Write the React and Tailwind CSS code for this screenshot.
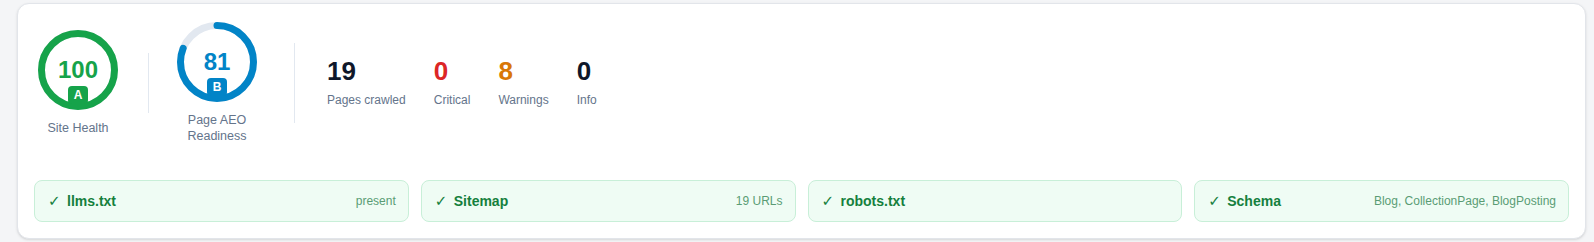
import React from 'react';

const checks = [
  { name: 'llms.txt', detail: 'present' },
  { name: 'Sitemap', detail: '19 URLs' },
  { name: 'robots.txt', detail: '' },
  { name: 'Schema', detail: 'Blog, CollectionPage, BlogPosting' },
];

const stats = [
  { value: '19', label: 'Pages crawled', color: 'text-[#0f172a]' },
  { value: '0', label: 'Critical', color: 'text-[#dc2626]' },
  { value: '8', label: 'Warnings', color: 'text-[#d97706]' },
  { value: '0', label: 'Info', color: 'text-[#0f172a]' },
];

function Gauge({ score, grade, color, label }) {
  const r = 36.5;
  const circ = 2 * Math.PI * r;
  const dash = (score / 100) * circ;
  return (
    <div className="flex flex-col items-center w-20">
      <div className="relative w-20 h-20">
        <svg width="80" height="80" viewBox="0 0 80 80" className="-rotate-90">
          <circle cx="40" cy="40" r={r} fill="none" stroke="#e2e8f0" strokeWidth="7" />
          <circle
            cx="40"
            cy="40"
            r={r}
            fill="none"
            stroke={color}
            strokeWidth="7"
            strokeLinecap="round"
            strokeDasharray={`${dash} ${circ}`}
          />
        </svg>
        <div
          className="absolute inset-0 flex items-center justify-center text-[24px] font-bold leading-none"
          style={{ color }}
        >
          {score}
        </div>
        <div
          className="absolute left-1/2 top-[56px] -translate-x-1/2 w-5 h-[18px] rounded-[4px] flex items-center justify-center text-white text-[12px] font-bold leading-none"
          style={{ backgroundColor: color }}
        >
          {grade}
        </div>
      </div>
      <div className="mt-[10px] text-[12.5px] leading-4 text-[#64748b] text-center">{label}</div>
    </div>
  );
}

export default function App() {
  return (
    <div className="min-h-[242px] bg-[#f4f5f7] pl-[17px] pr-[8px] pt-[3px] font-['Liberation_Sans',Arial,sans-serif]">
      <div className="bg-white border border-[#e2e5ea] rounded-xl p-4 shadow-sm">
        {/* Header scores */}
        <div className="flex items-center pt-[2px]">
          <div className="ml-1">
            <Gauge score={100} grade="A" color="#16a34a" label="Site Health" />
          </div>
          <div className="ml-[30px] w-px h-[60px] bg-[#e2e8f0]"></div>
          <div className="ml-[28px]">
            <Gauge score={81} grade="B" color="#0284c7" label="Page AEO Readiness" />
          </div>
          <div className="ml-[37px] w-px h-20 bg-[#e2e8f0]"></div>

          <div className="ml-[32px] flex gap-7">
            {stats.map((s) => (
              <div key={s.label} className="flex flex-col">
                <span className={`text-[26px] font-bold leading-none ${s.color}`}>{s.value}</span>
                <span className="mt-[8px] text-[12px] leading-4 text-[#64748b]">{s.label}</span>
              </div>
            ))}
          </div>
        </div>

        {/* Checks */}
        <div className="mt-[36px] grid grid-cols-4 gap-3">
          {checks.map((c) => (
            <div
              key={c.name}
              className="h-[42px] flex items-center justify-between rounded-lg border border-[#c8efd8] bg-[#effcf4] pl-[13px] pr-3"
            >
              <div className="flex items-center">
                <span className="w-[19px] text-[15px] font-bold text-[#15803d] font-['DejaVu_Sans',sans-serif]">✓</span>
                <span className="text-[14px] font-bold text-[#15803d]">{c.name}</span>
              </div>
              <span className="text-[12px] text-[#5a9c74]">{c.detail}</span>
            </div>
          ))}
        </div>
      </div>
    </div>
  );
}
